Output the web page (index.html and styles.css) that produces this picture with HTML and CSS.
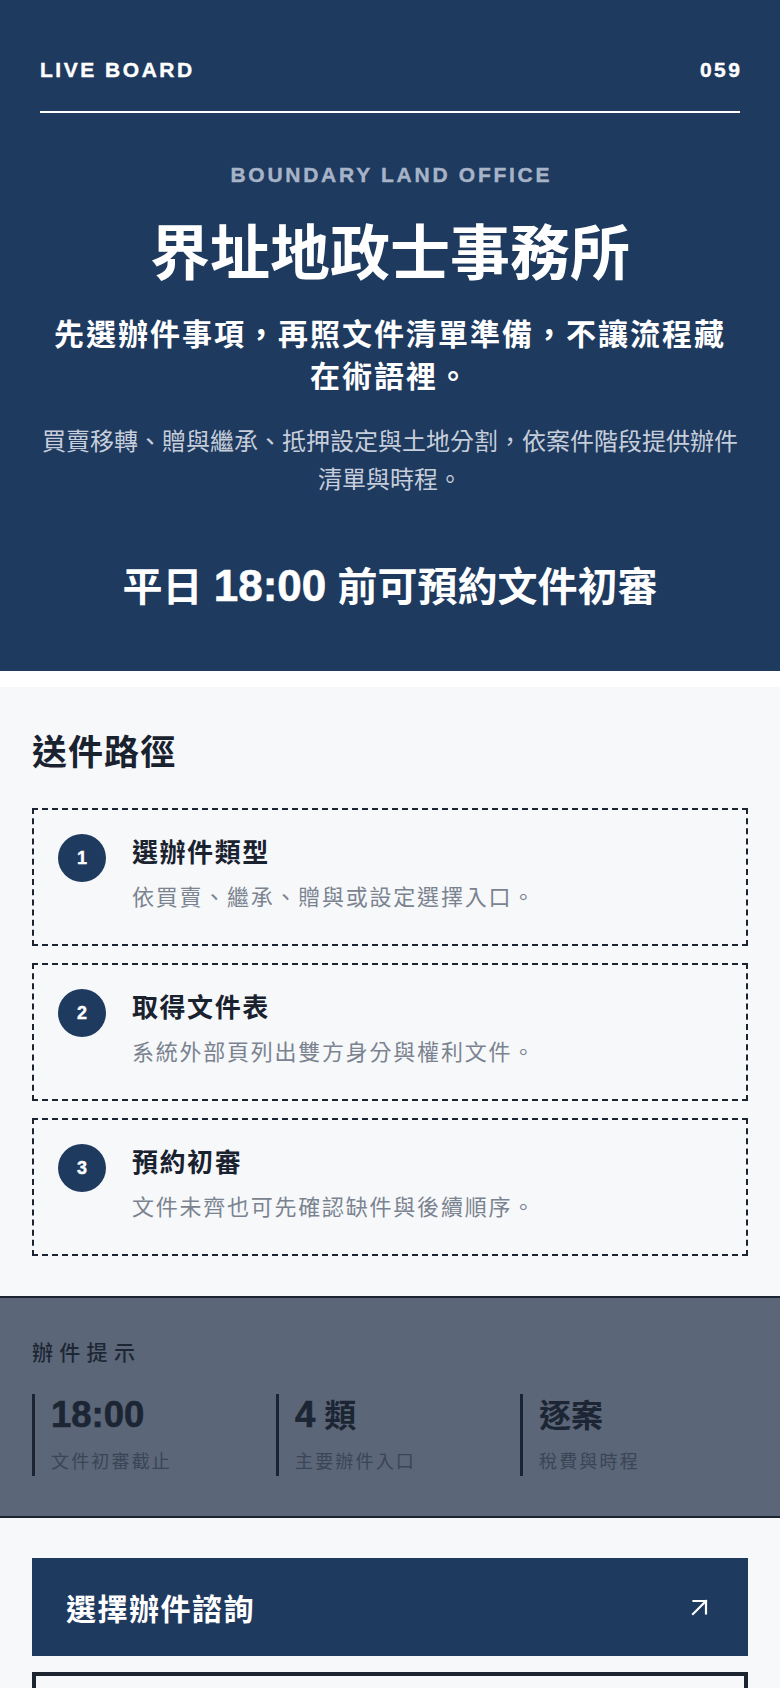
FILE: index.html
```html
<!DOCTYPE html>
<html lang="zh-Hant">
<head>
<meta charset="utf-8">
<meta name="viewport" content="width=device-width, initial-scale=1">
<title>界址地政士事務所</title>
<link rel="stylesheet" href="styles.css">
</head>
<body>
<header class="hero">
  <div class="topbar">
    <span class="topbar-label">LIVE BOARD</span>
    <span class="topbar-num">059</span>
  </div>
  <p class="eyebrow">BOUNDARY LAND OFFICE</p>
  <h1 class="hero-title">界址地政士事務所</h1>
  <p class="hero-lead">先選辦件事項，再照文件清單準備，不讓流程藏在術語裡。</p>
  <p class="hero-desc">買賣移轉、贈與繼承、抵押設定與土地分割，依案件階段提供辦件清單與時程。</p>
  <p class="hero-highlight">平日 <span class="num">18:00</span> 前可預約文件初審</p>
</header>

<main class="content">
  <section class="route">
    <h2 class="route-title">送件路徑</h2>
    <ol class="steps">
      <li class="step">
        <span class="step-badge">1</span>
        <div class="step-body">
          <h3 class="step-title">選辦件類型</h3>
          <p class="step-desc">依買賣、繼承、贈與或設定選擇入口。</p>
        </div>
      </li>
      <li class="step">
        <span class="step-badge">2</span>
        <div class="step-body">
          <h3 class="step-title">取得文件表</h3>
          <p class="step-desc">系統外部頁列出雙方身分與權利文件。</p>
        </div>
      </li>
      <li class="step">
        <span class="step-badge">3</span>
        <div class="step-body">
          <h3 class="step-title">預約初審</h3>
          <p class="step-desc">文件未齊也可先確認缺件與後續順序。</p>
        </div>
      </li>
    </ol>
  </section>

  <section class="tips">
    <p class="tips-label">辦件提示</p>
    <div class="stats">
      <div class="stat">
        <div class="stat-value"><span class="num">18:00</span></div>
        <div class="stat-label">文件初審截止</div>
      </div>
      <div class="stat">
        <div class="stat-value"><span class="num">4</span> 類</div>
        <div class="stat-label">主要辦件入口</div>
      </div>
      <div class="stat">
        <div class="stat-value">逐案</div>
        <div class="stat-label">稅費與時程</div>
      </div>
    </div>
  </section>

  <section class="cta">
    <a class="cta-button" href="#">
      <span>選擇辦件諮詢</span>
      <svg class="cta-arrow" width="17" height="17" viewBox="0 0 17 17" aria-hidden="true">
        <path d="M2 15 L15 2 M2.5 2 H15 V14.5" fill="none" stroke="#ffffff" stroke-width="2.2" stroke-linecap="square"/>
      </svg>
    </a>
    <div class="outline-box"></div>
  </section>
</main>
</body>
</html>
```

FILE: styles.css
```css
* {
  box-sizing: border-box;
}

html, body {
  margin: 0;
  padding: 0;
}

body {
  background: #ffffff;
  font-family: "Liberation Sans", "Noto Sans CJK TC", sans-serif;
  color: #1b2431;
}

p, h1, h2, h3, ol {
  margin: 0;
  padding: 0;
}

.num {
  font-family: "Liberation Sans", Arial, sans-serif;
  font-weight: 700;
  font-size: 1.1em;
  line-height: 1;
  -webkit-text-stroke: 0.6px currentColor;
}

/* ---------- hero ---------- */
.hero {
  background: #1f3a5f;
  color: #ffffff;
  padding: 58px 40px 60px;
  text-align: center;
}

.topbar {
  display: flex;
  justify-content: space-between;
  align-items: center;
  font-size: 21px;
  line-height: 24px;
  font-weight: 700;
  letter-spacing: 0.12em;
  padding-bottom: 29px;
  border-bottom: 2px solid #ffffff;
  -webkit-text-stroke: 0.4px currentColor;
}

.topbar-num {
  margin-right: -0.12em;
}

.eyebrow {
  margin-top: 50px;
  font-size: 21px;
  line-height: 23px;
  font-weight: 700;
  letter-spacing: 0.13em;
  padding-left: 0.13em;
  color: #a7b4c8;
  -webkit-text-stroke: 0.4px currentColor;
}

.hero-title {
  margin-top: 33px;
  font-size: 60px;
  line-height: 71px;
  font-weight: 700;
}

.hero-lead {
  margin-top: 24px;
  font-size: 30px;
  line-height: 42px;
  font-weight: 700;
  letter-spacing: 2px;
}

.hero-desc {
  margin-top: 25px;
  font-size: 24px;
  line-height: 38px;
  color: #c6cedb;
}

.hero-highlight {
  margin-top: 64px;
  font-size: 40px;
  line-height: 48px;
  font-weight: 700;
}

/* ---------- content ---------- */
.content {
  margin-top: 16px;
  background: #f6f8fa;
  padding-bottom: 40px;
}

.route {
  padding: 44px 32px 40px;
}

.route-title {
  font-size: 35px;
  line-height: 44px;
  font-weight: 700;
  letter-spacing: 0.03em;
  color: #1a2230;
  margin-bottom: 33px;
}

.steps {
  list-style: none;
  display: flex;
  flex-direction: column;
  gap: 17px;
}

.step {
  display: flex;
  align-items: flex-start;
  gap: 26px;
  border: 2px dashed #1b2430;
  padding: 24px 24px 29px;
}

.step-badge {
  flex: none;
  width: 48px;
  height: 48px;
  border-radius: 50%;
  background: #1f3a5f;
  color: #ffffff;
  display: flex;
  align-items: center;
  justify-content: center;
  font-family: "Liberation Sans", Arial, sans-serif;
  font-weight: 700;
  font-size: 18px;
  -webkit-text-stroke: 0.4px currentColor;
}

.step-title {
  font-size: 26px;
  line-height: 38px;
  font-weight: 700;
  letter-spacing: 0.06em;
  color: #1a2230;
}

.step-desc {
  margin-top: 8px;
  font-size: 22px;
  line-height: 35px;
  letter-spacing: 0.08em;
  color: #7b8390;
}

/* ---------- tips ---------- */
.tips {
  background: #5b6678;
  border-top: 2px solid #1c2431;
  border-bottom: 2px solid #1c2431;
  padding: 41px 32px 40px;
}

.tips-label {
  font-size: 21px;
  line-height: 28px;
  font-weight: 500;
  letter-spacing: 0.3em;
  color: #1d2734;
  margin-bottom: 27px;
}

.stats {
  display: grid;
  grid-template-columns: repeat(3, 1fr);
  gap: 16px;
}

.stat {
  border-left: 3px solid #1c2431;
  padding-left: 16px;
}

.stat-value {
  font-size: 32px;
  line-height: 44px;
  font-weight: 700;
  color: #1b2533;
}

.stat-value .num {
  font-size: 1.14em;
}

.stat-label {
  margin-top: 10px;
  font-size: 18px;
  line-height: 28px;
  letter-spacing: 0.12em;
  color: #3a4556;
}

/* ---------- cta ---------- */
.cta {
  padding: 40px 32px 0;
}

.cta-button {
  display: flex;
  justify-content: space-between;
  align-items: center;
  height: 98px;
  padding: 0 40px 0 34px;
  background: #1f3a5f;
  color: #ffffff;
  text-decoration: none;
  font-size: 30px;
  font-weight: 700;
  letter-spacing: 0.05em;
}

.cta-arrow {
  display: block;
}

.outline-box {
  margin-top: 16px;
  min-height: 120px;
  border: 4px solid #1c2530;
  background: #f6f8fa;
}
```
